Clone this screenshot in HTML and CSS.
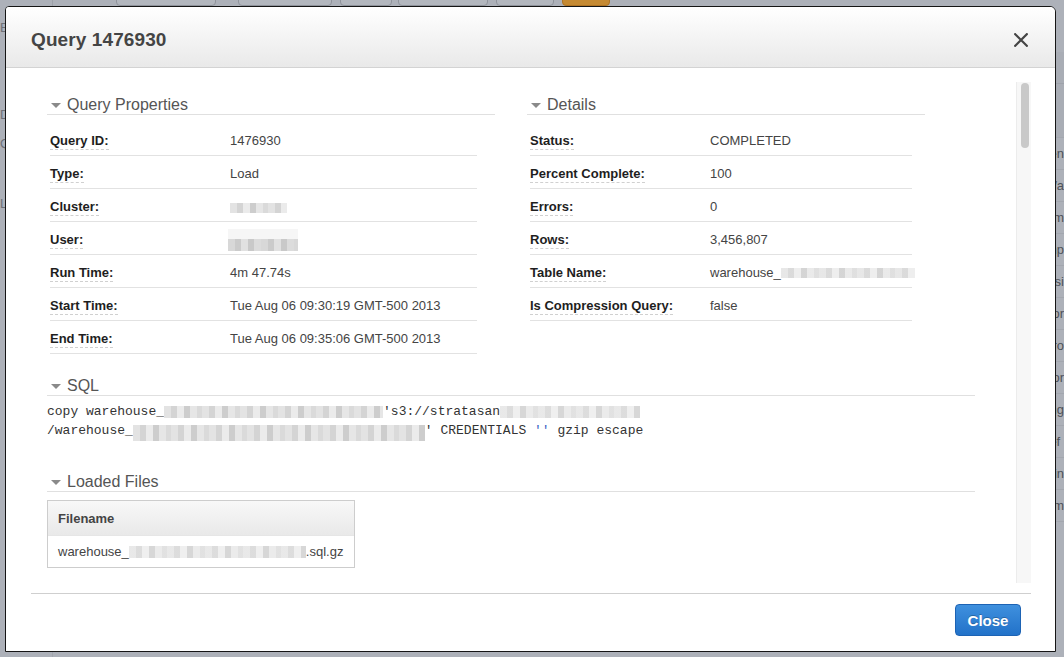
FILE: index.html
```html
<!DOCTYPE html>
<html>
<head>
<meta charset="utf-8">
<title>Query 1476930</title>
<link rel="stylesheet" href="styles.css">
</head>
<body>
<div class="page">
  <div class="toolbar">
    <span class="tb-btn b1"></span>
    <span class="tb-btn b2"></span>
    <span class="tb-btn b3"></span>
    <span class="tb-btn b4"></span>
    <span class="tb-btn b5"></span>
    <span class="tb-btn b6 orange"></span>
  </div>
  <div class="page-main">
    <aside class="sidebar">
      <div class="side-item s1">Edit</div>
      <div class="side-item s2">Details</div>
      <div class="side-item s3">Queries</div>
      <div class="side-item s4">Loads</div>
    </aside>
    <div class="page-content">
      <div class="list">
        <div class="list-head"></div>
        <div class="list-row tall"></div>
        <div class="list-row"><span class="frag">Open</span></div>
        <div class="list-row"><span class="frag">s3://a</span></div>
        <div class="list-row"><span class="frag">Colum</span></div>
        <div class="list-row"><span class="frag">Comp</span></div>
        <div class="list-row"><span class="frag">Posi</span></div>
        <div class="list-row"><span class="frag">Error</span></div>
        <div class="list-row"><span class="frag">Erro</span></div>
        <div class="list-row"><span class="frag">Error</span></div>
        <div class="list-row"><span class="frag">Strng</span></div>
        <div class="list-row"><span class="frag">Ref</span></div>
        <div class="list-row"><span class="frag">Begin</span></div>
        <div class="list-row"><span class="frag">Summ</span></div>
      </div>
    </div>
  </div>
</div>

<div class="modal">
  <div class="modal-header">
    <h2 class="modal-title">Query 1476930</h2>
    <button class="x-btn" aria-label="Close">
      <svg width="14" height="14" viewBox="0 0 14 14"><path d="M1.2 1.2 L12.8 12.8 M12.8 1.2 L1.2 12.8" stroke="#444" stroke-width="2.2" stroke-linecap="square" fill="none"/></svg>
    </button>
  </div>
  <div class="modal-body">
    <div class="scroll">
      <div class="scroll-content">
        <div class="cols">
          <section class="sec sec-left">
            <h3 class="sec-head"><span class="caret"></span>Query Properties</h3>
            <div class="props">
              <div class="prop"><div class="k"><span class="lbl">Query ID:</span></div><div class="v">1476930</div></div>
              <div class="prop"><div class="k"><span class="lbl">Type:</span></div><div class="v">Load</div></div>
              <div class="prop"><div class="k"><span class="lbl">Cluster:</span></div><div class="v"><span class="blur blur-cluster"></span></div></div>
              <div class="prop"><div class="k"><span class="lbl">User:</span></div><div class="v"><span class="blur blur-user"></span></div></div>
              <div class="prop"><div class="k"><span class="lbl">Run Time:</span></div><div class="v">4m 47.74s</div></div>
              <div class="prop"><div class="k"><span class="lbl">Start Time:</span></div><div class="v">Tue Aug 06 09:30:19 GMT-500 2013</div></div>
              <div class="prop"><div class="k"><span class="lbl">End Time:</span></div><div class="v">Tue Aug 06 09:35:06 GMT-500 2013</div></div>
            </div>
          </section>
          <section class="sec sec-right">
            <h3 class="sec-head"><span class="caret"></span>Details</h3>
            <div class="props props-right">
              <div class="prop"><div class="k"><span class="lbl">Status:</span></div><div class="v">COMPLETED</div></div>
              <div class="prop"><div class="k"><span class="lbl">Percent Complete:</span></div><div class="v">100</div></div>
              <div class="prop"><div class="k"><span class="lbl">Errors:</span></div><div class="v">0</div></div>
              <div class="prop"><div class="k"><span class="lbl">Rows:</span></div><div class="v">3,456,807</div></div>
              <div class="prop"><div class="k"><span class="lbl">Table Name:</span></div><div class="v">warehouse_<span class="blur blur-table"></span></div></div>
              <div class="prop"><div class="k"><span class="lbl">Is Compression Query:</span></div><div class="v">false</div></div>
            </div>
          </section>
        </div>

        <section class="sec sec-wide sec-sql">
          <h3 class="sec-head"><span class="caret"></span>SQL</h3>
          <div class="code"><div class="code-line">copy warehouse_<span class="blur blur-c1"></span>'s3://stratasan<span class="blur blur-c2"></span></div><div class="code-line">/warehouse_<span class="blur blur-c3"></span>' CREDENTIALS <span class="str">''</span> gzip escape</div></div>
        </section>

        <section class="sec sec-wide sec-files">
          <h3 class="sec-head"><span class="caret"></span>Loaded Files</h3>
          <div class="files">
            <div class="files-head">Filename</div>
            <div class="files-row">warehouse_<span class="blur blur-file"></span>.sql.gz</div>
          </div>
        </section>
      </div>
      <div class="scrollbar"><div class="thumb"></div></div>
    </div>
  </div>
  <div class="modal-footer">
    <button class="btn-close">Close</button>
  </div>
</div>
</body>
</html>
```

FILE: styles.css
```css
* { box-sizing: border-box; }

html, body {
  margin: 0;
  padding: 0;
  width: 1064px;
  height: 657px;
  overflow: hidden;
  font-family: "Liberation Sans", Arial, sans-serif;
}

/* ---------- background page ---------- */
.page {
  width: 1064px;
  height: 657px;
  background: #adb1b9;
  display: flex;
  flex-direction: column;
}

.toolbar {
  height: 20px;
  margin-top: -14px;
  display: flex;
  border-left: 1px solid #9da1a9;
  margin-left: 52px;
  padding-left: 63px;
}

.tb-btn {
  height: 20px;
  border: 1px solid #8f939b;
  border-radius: 4px;
  background: #b3b7be;
  margin-right: 8px;
}
.b1 { width: 100px; margin-right: 22px; }
.b2 { width: 94px; }
.b3 { width: 52px; margin-right: 6px; }
.b4 { width: 90px; }
.b5 { width: 58px; }
.b6 { width: 48px; }
.orange { background: #c58a33; border-color: #b07424; }

.page-main {
  flex: 1;
  display: flex;
}

.sidebar {
  width: 53px;
  border-right: 1px solid #a2a6ae;
  padding-top: 10px;
  overflow: hidden;
}

.side-item {
  font-size: 13px;
  color: #6d7078;
  white-space: nowrap;
  text-align: right;
  padding-right: 44px;
}
.s1 { margin-top: 4px; }
.s2 { margin-top: 72px; }
.s3 { margin-top: 14px; }
.s4 { margin-top: 45px; }

.page-content {
  flex: 1;
  padding-top: 46px;
  overflow: hidden;
}

.list-head {
  height: 32px;
  background: #a9adb5;
  border-bottom: 1px solid #9ea2aa;
}
.list-row {
  height: 32px;
  border-bottom: 1px solid #a3a7af;
  display: flex;
  align-items: center;
  justify-content: flex-end;
  overflow: hidden;
}
.list-row.tall { height: 54px; background: #a9adb5; }
.frag {
  width: 24px;
  font-size: 13px;
  color: #4e5158;
  white-space: nowrap;
  overflow: hidden;
  direction: rtl;
  text-align: left;
}

/* ---------- modal ---------- */
.modal {
  position: absolute;
  left: 5px;
  top: 6px;
  width: 1051px;
  height: 646px;
  background: #fff;
  border: 1px solid #151515;
  border-radius: 4px 6px 0 0;
  display: flex;
  flex-direction: column;
  overflow: hidden;
}

.modal-header {
  height: 61px;
  flex: none;
  padding: 6px 27px 0 25px;
  display: flex;
  align-items: center;
  justify-content: space-between;
  background: linear-gradient(#ffffff, #e9e9e9);
  border-bottom: 1px solid #d3d3d3;
}

.modal-title {
  margin: 0;
  font-size: 19px;
  font-weight: bold;
  color: #444;
  letter-spacing: 0.1px;
}

.x-btn {
  border: 0;
  background: none;
  padding: 0;
  width: 14px;
  height: 14px;
  display: flex;
}

.modal-body {
  flex: none;
  padding: 14px 24px 10px 25px;
}

.scroll {
  height: 501px;
  display: flex;
}

.scroll-content {
  flex: 1;
  padding-left: 16px;
  padding-right: 40px;
  overflow: hidden;
}

.scrollbar {
  width: 15px;
  background: #f7f7f7;
  border-left: 1px solid #ececec;
  padding: 1px 0 0 4px;
}
.thumb {
  width: 8px;
  height: 65px;
  border-radius: 4px;
  background: #c9c9c9;
}

.cols {
  display: flex;
  gap: 32px;
  align-items: flex-start;
}

.sec { margin-top: 12px; }
.sec-left { width: 448px; }
.sec-right { width: 398px; }

.sec-head {
  margin: 0;
  height: 21px;
  line-height: 20px;
  padding-top: 1px;
  font-size: 16px;
  font-weight: normal;
  color: #555;
  border-bottom: 1px solid #e0e0e0;
  display: flex;
  align-items: center;
}

.caret {
  width: 0;
  height: 0;
  border-left: 5px solid transparent;
  border-right: 5px solid transparent;
  border-top: 5px solid #8a8a8a;
  margin: 1px 6px 0 4px;
}

.props {
  margin: 8px 0 0 3px;
  width: 427px;
}
.props-right { width: 382px; }

.prop {
  display: flex;
  align-items: flex-start;
  height: 33px;
  padding-top: 10px;
  font-size: 13px;
  border-bottom: 1px solid #e2e2e2;
}

.k { width: 180px; flex: none; height: 17px; }
.lbl {
  font-weight: bold;
  color: #1e1e1e;
  display: inline-block;
  line-height: 15px;
  border-bottom: 1px dashed #d0d0d0;
  padding-bottom: 1px;
  vertical-align: top;
}
.v {
  color: #444;
  white-space: nowrap;
  height: 15px;
  line-height: 15px;
  display: flex;
  align-items: center;
}

/* pixelated redactions */
.blur {
  display: inline-block;
  flex: none;
  height: 11px;
  background:
    repeating-linear-gradient(90deg,
      #e3e3e3 0 7px, #d4d4d4 7px 13px, #ebebeb 13px 20px,
      #cdcdcd 20px 26px, #e6e6e6 26px 33px, #dadada 33px 38px);
}
.blur-cluster { width: 57px; height: 10px; margin-top: 2px; }
.blur-user {
  width: 70px;
  height: 22px;
  margin-left: -2px;
  background:
    linear-gradient(#f6f6f6 0 10px, transparent 10px),
    repeating-linear-gradient(90deg,
      #d8d8d8 0 7px, #cbcbcb 7px 13px, #e1e1e1 13px 20px,
      #c9c9c9 20px 26px, #dcdcdc 26px 33px);
}
.blur-table { width: 134px; height: 10px; opacity: 0.85; }

.sec-wide { width: 928px; }
.sec-sql { margin-top: 21px; }

.code {
  margin-top: 6px;
  font-family: "Liberation Mono", "Courier New", monospace;
  font-size: 13px;
  line-height: 19px;
  color: #333;
  white-space: pre;
}
.code-line { display: flex; align-items: center; height: 19px; }
.code .blur { height: 12px; }
.blur-c1 { width: 219px; }
.blur-c2 { width: 140px; opacity: 0.8; }
.blur-c3 { width: 292px; height: 16px !important; margin-top: 4px; }
.str { color: #3b63c4; }

.sec-files { margin-top: 31px; }

.files {
  margin-top: 8px;
  width: 308px;
  border: 1px solid #cdcdcd;
}
.files-head {
  height: 35px;
  padding-left: 10px;
  display: flex;
  align-items: center;
  font-size: 13px;
  font-weight: bold;
  color: #444;
  background: linear-gradient(#f8f8f8, #e9e9e9);
  border-bottom: 1px solid #e6e6e6;
}
.files-row {
  height: 31px;
  padding-left: 10px;
  display: flex;
  align-items: center;
  font-size: 13px;
  color: #444;
  white-space: nowrap;
}
.blur-file { width: 177px; height: 12px; opacity: 0.8; }

.modal-footer {
  margin: 0 24px 0 25px;
  border-top: 1px solid #cfcfcf;
  padding: 10px 10px 0 0;
  display: flex;
  justify-content: flex-end;
}

.btn-close {
  width: 66px;
  height: 32px;
  border: 1px solid #1d63b4;
  border-radius: 4px;
  background: linear-gradient(#3f90de, #2272c9);
  color: #fff;
  font-family: "Liberation Sans", Arial, sans-serif;
  font-size: 15px;
  font-weight: bold;
  text-shadow: 0 -1px 0 rgba(0,0,0,0.25);
  padding: 0;
}
```
